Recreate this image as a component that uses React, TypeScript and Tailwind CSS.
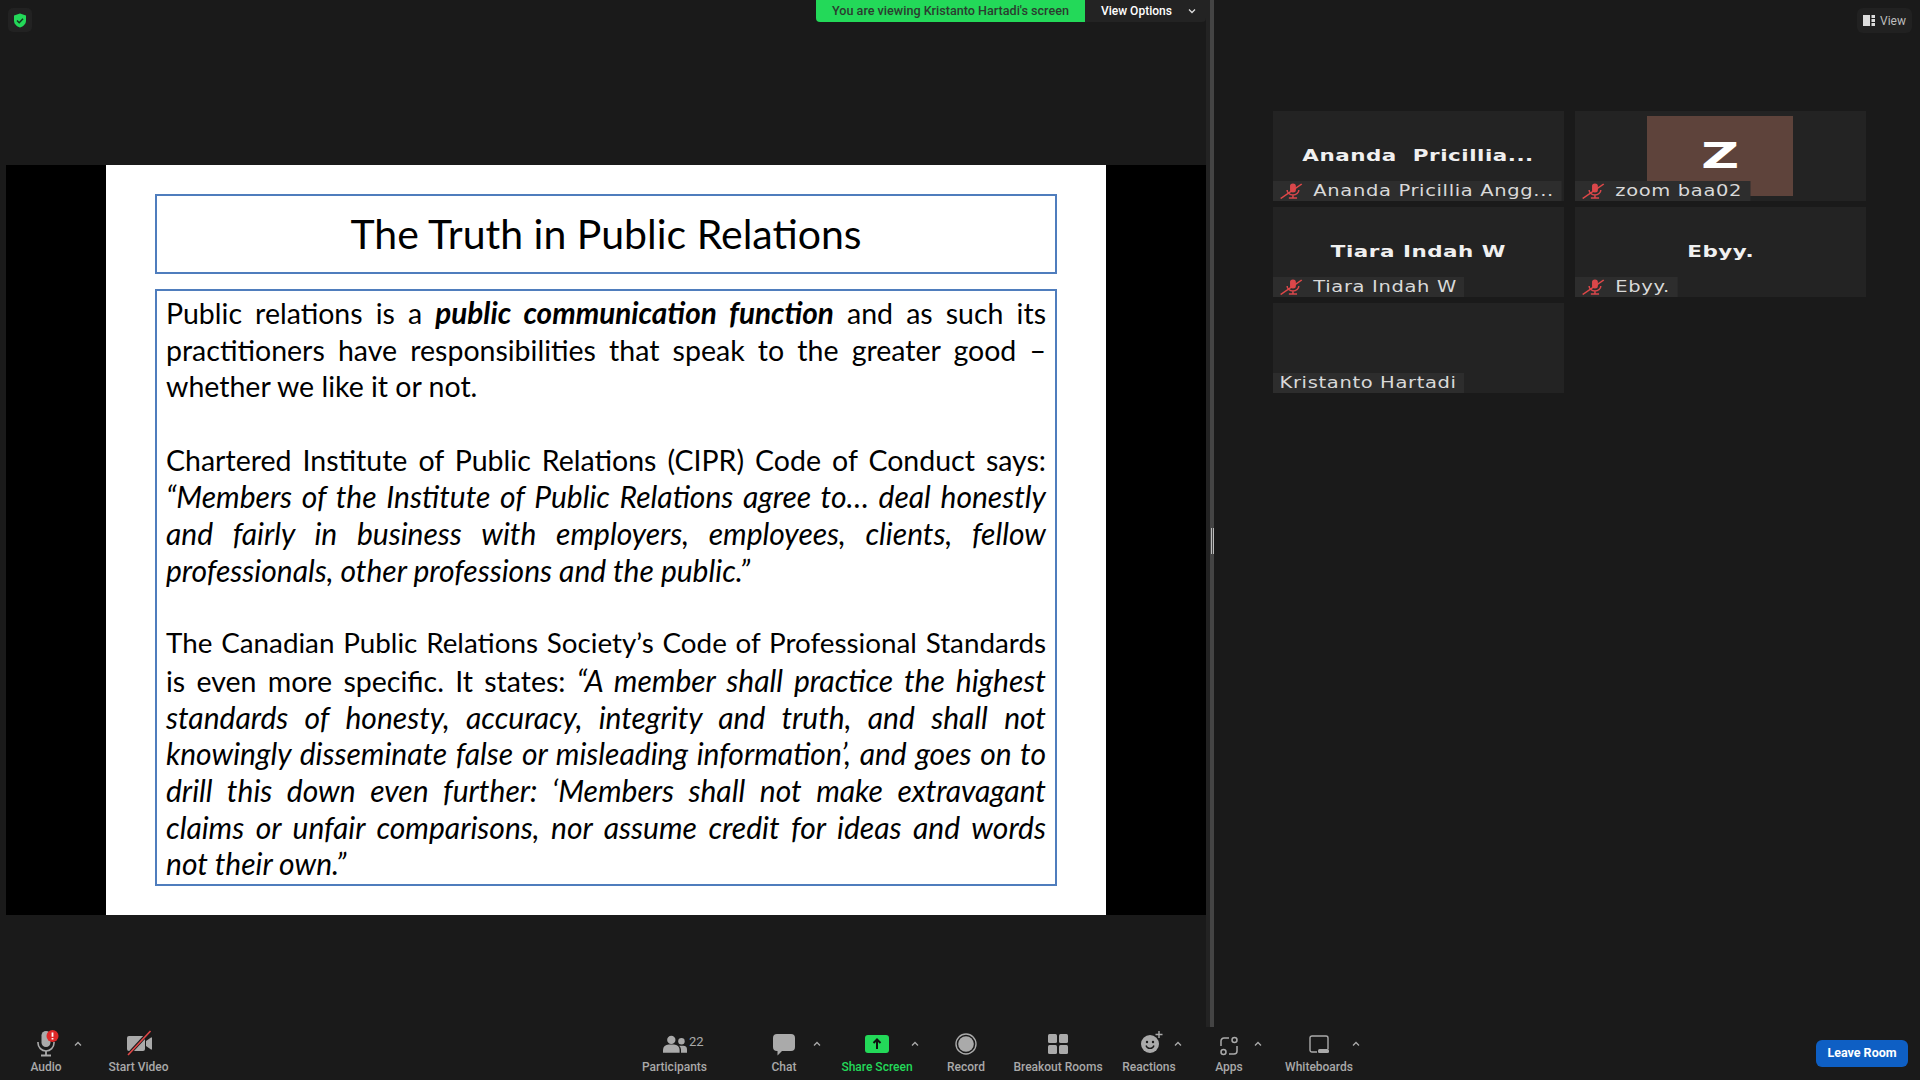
import React from 'react';

const uiFont = "font-['Roboto',sans-serif]";

function MicIcon() {
  return (
    <svg width="28" height="28" viewBox="0 0 28 28" className="mb-[-1px]">
      <rect x="9.500" y="1" width="9" height="16" rx="4.500" fill="#aaa" />
      <path d="M6 12v1a8 8 0 0 0 16 0v-1" fill="none" stroke="#aaa" strokeWidth="1.600" />
      <path d="M14 21v4M9 25.500h10" stroke="#aaa" strokeWidth="1.800" />
      <circle cx="20.500" cy="6" r="6" fill="#e02828" />
      <path d="M20.500 2.400v4.400M20.500 8v1.400" stroke="#fff" strokeWidth="1.800" />
    </svg>
  );
}

function VideoOffIcon() {
  return (
    <svg width="28" height="26" viewBox="0 0 28 26" className="mb-[1px]">
      <path d="M4 6h14a2 2 0 0 1 2 2v11a2 2 0 0 1-2 2H4a2 2 0 0 1-2-2V8a2 2 0 0 1 2-2z" fill="#aaa" />
      <path d="M21 11l5-3.500a.6.6 0 0 1 1 .5v11a.6.6 0 0 1-1 .5L21 16z" fill="#aaa" />
      <path d="M25 1L3 25" stroke="#1a1a1a" strokeWidth="3.400" />
      <path d="M25.500 1L3 25" stroke="#e04848" strokeWidth="1.600" />
    </svg>
  );
}

function PeopleIcon() {
  return (
    <svg width="24" height="19" viewBox="0 0 26 20" className="mb-[3px]">
      <circle cx="9" cy="5" r="4.500" fill="#aaa" />
      <path d="M0 19v-3a6 6 0 0 1 6-6h6a6 6 0 0 1 6 6v3z" fill="#aaa" />
      <circle cx="20" cy="6.500" r="3.500" fill="#aaa" />
      <path d="M19.500 19v-3.500a6 6 0 0 0-2-4.200h4.500a4 4 0 0 1 4 4V19z" fill="#aaa" />
    </svg>
  );
}

function ChatIcon() {
  return (
    <svg width="22" height="24" viewBox="0 0 22 24">
      <path d="M4 1h14a4 4 0 0 1 4 4v9a4 4 0 0 1-4 4H9l-4.500 4.500V18H4a4 4 0 0 1-4-4V5a4 4 0 0 1 4-4z" fill="#aaa" />
    </svg>
  );
}

function ShareIcon() {
  return (
    <div className="w-[24px] h-[18px] mb-[4px] rounded-[3px] bg-[#23d959] flex items-center justify-center">
      <svg width="10" height="12" viewBox="0 0 10 12">
        <path d="M5 11V2M1.500 5L5 1.500 8.500 5" fill="none" stroke="#0f0f0f" strokeWidth="2" />
      </svg>
    </div>
  );
}

function RecordIcon() {
  return (
    <svg width="22" height="22" viewBox="0 0 22 22" className="mb-[2px]">
      <circle cx="11" cy="11" r="10" fill="none" stroke="#aaa" strokeWidth="1.400" />
      <circle cx="11" cy="11" r="7.800" fill="#aaa" />
    </svg>
  );
}

function BreakoutIcon() {
  return (
    <svg width="20" height="20" viewBox="0 0 20 20" fill="#aaa" className="mb-[3px]">
      <rect x="0" y="0" width="9" height="9" rx="1.500" />
      <rect x="11" y="0" width="9" height="9" rx="1.500" />
      <rect x="0" y="11" width="9" height="9" rx="1.500" />
      <rect x="11" y="11" width="9" height="9" rx="1.500" />
    </svg>
  );
}

function ReactionIcon() {
  return (
    <svg width="24" height="24" viewBox="0 0 24 24" className="mb-[2px] ml-[5px]">
      <circle cx="10" cy="13" r="9" fill="#aaa" />
      <circle cx="7" cy="11" r="1.200" fill="#1a1a1a" />
      <circle cx="13" cy="11" r="1.200" fill="#1a1a1a" />
      <path d="M6 14.500a4.200 4.200 0 0 0 8 0" fill="none" stroke="#1a1a1a" strokeWidth="1.300" />
      <path d="M19 0v7M15.500 3.500h7" stroke="#aaa" strokeWidth="1.400" />
    </svg>
  );
}

function AppsIcon() {
  return (
    <svg width="18" height="20" viewBox="0 0 18 20" fill="none" stroke="#aaa" strokeWidth="1.500" className="mb-[1px]">
      <path d="M9 2H4a3 3 0 0 0-3 3v5" />
      <circle cx="14.500" cy="4" r="2.500" />
      <circle cx="3.500" cy="16" r="2.500" />
      <path d="M9 18h5a3 3 0 0 0 3-3v-5" />
    </svg>
  );
}

function WhiteboardIcon() {
  return (
    <svg width="20" height="20" viewBox="0 0 20 20" className="mb-[2px]">
      <path d="M8 17H3a2 2 0 0 1-2-2V3a2 2 0 0 1 2-2h14a2 2 0 0 1 2 2v11" fill="none" stroke="#aaa" strokeWidth="1.400" />
      <rect x="9" y="14" width="11" height="4" rx="1.500" fill="#aaa" />
    </svg>
  );
}

function Caret({ className }: { className: string }) {
  return (
    <svg className={`absolute ${className}`} width="8" height="6" viewBox="0 0 8 6">
      <path d="M1 4.500L4 1.500 7 4.500" fill="none" stroke="#aaa" strokeWidth="1.300" />
    </svg>
  );
}

function ToolButton({ label, width, icon, green, children }: { label: string; width: string; icon: React.ReactNode; green?: boolean; children?: React.ReactNode }) {
  return (
    <div className={`relative flex flex-col items-center shrink-0 ${width}`}>
      <div className="h-[33px] flex items-end pb-[3px]">{icon}</div>
      <span className={`text-[12px] leading-[14px] font-medium whitespace-nowrap ${green ? 'text-[#23d959]' : 'text-[#a9a9a9]'}`}>{label}</span>
      {children}
    </div>
  );
}

function MutedIcon() {
  return (
    <svg width="18" height="16" viewBox="0 0 20 16" preserveAspectRatio="none" className="shrink-0">
      <rect x="9" y="0.500" width="5" height="9" rx="2.500" fill="#d9474b" />
      <path d="M6.500 7a5 5 0 0 0 10 0M11.500 12v3M8 15h7" fill="none" stroke="#d9474b" strokeWidth="1.300" />
      <path d="M1 15.500L19 1" stroke="#e04848" strokeWidth="1.400" />
    </svg>
  );
}

// the gallery is a stretched capture: names come out about 1.3x wider than tall
function Tile({ big, label, muted = true, avatar }: { big?: string; label: string; muted?: boolean; avatar?: boolean }) {
  return (
    <div className="relative h-[90px] bg-[#232323] flex items-center justify-center overflow-hidden">
      {avatar && (
        <div className="absolute left-[72px] top-[5px] w-[146px] h-[80px] bg-[#5e433b] flex items-center justify-center">
          <span className="text-white font-bold text-[36px] scale-x-[1.45] font-['DejaVu_Sans',sans-serif]">Z</span>
        </div>
      )}
      {big && (
        <span className="text-[#f0f0f0] font-bold text-[16.500px] tracking-[0.4px] scale-x-[1.3] whitespace-pre font-['DejaVu_Sans',sans-serif]">{big}</span>
      )}
      <div className="absolute left-0 bottom-0 h-[20px] origin-bottom-left scale-x-[1.3] bg-[#2d2d2d] flex items-center pl-[5px] pr-[6px] gap-[8px]">
        {muted && <MutedIcon />}
        <span className="text-[#d9d9d9] text-[15px] tracking-[0.5px] whitespace-pre font-['DejaVu_Sans',sans-serif]">{label}</span>
      </div>
    </div>
  );
}

const jl = "block h-[36.700px] text-justify [text-align-last:justify]";
const it = "italic text-[30px]";

function Slide() {
  return (
    <div className="w-[1000px] h-[750px] bg-white flex flex-col pl-[49px] pr-[49px] pt-[29px] text-black font-['Lato',sans-serif]">
      <div className="h-[80px] shrink-0 border-2 border-[#4f7dbd] flex items-center justify-center text-[41px]">
        The Truth in Public Relations
      </div>
      <div className="mt-[15px] h-[597px] shrink-0 border-2 border-[#4f7dbd] px-[9px] pt-[4px] text-[28.500px] leading-[36.700px]">
        <span className={jl}>Public relations is a <b><i className="text-[29.700px]">public communication function</i></b> and as such its</span>
        <span className={jl}>practitioners have responsibilities that speak to the greater good –</span>
        <span className="block">whether we like it or not.</span>
        <span className="block h-[36.700px]" />
        <span className={jl}>Chartered Institute of Public Relations (CIPR) Code of Conduct says:</span>
        <span className={`${jl} ${it}`}>“Members of the Institute of Public Relations agree to… deal honestly</span>
        <span className={`${jl} ${it}`}>and fairly in business with employers, employees, clients, fellow</span>
        <span className={`block h-[36.700px] ${it}`}>professionals, other professions and the public.”</span>
        <span className="block h-[36.700px]" />
        <span className={`${jl} text-[27.800px]`}>The Canadian Public Relations Society’s Code of Professional Standards</span>
        <span className={jl}>is even more specific. It states: <i className="text-[30px]">“A member shall practice the highest</i></span>
        <span className={`${jl} ${it}`}>standards of honesty, accuracy, integrity and truth, and shall not</span>
        <span className={`${jl} ${it}`}>knowingly disseminate false or misleading information’, and goes on to</span>
        <span className={`${jl} ${it}`}>drill this down even further: ‘Members shall not make extravagant</span>
        <span className={`${jl} ${it}`}>claims or unfair comparisons, nor assume credit for ideas and words</span>
        <span className={`block h-[36.700px] ${it}`}>not their own.”</span>
      </div>
    </div>
  );
}

export default function App() {
  return (
    <div className={`w-[1920px] h-[1080px] bg-[#1a1a1a] flex flex-col overflow-hidden ${uiFont}`}>
      <div className="flex-1 flex min-h-0">
        {/* shared screen */}
        <div className="relative w-[1206px] shrink-0 pl-[6px] pt-[165px]">
          <div className="w-[1200px] h-[750px] bg-black flex justify-center">
            <Slide />
          </div>

          <div className="absolute left-[8px] top-[8px] w-[24px] h-[24px] rounded-[5px] bg-[#222] flex items-center justify-center">
            <svg width="14" height="15" viewBox="0 0 14 15">
              <path d="M7 0.500L13 2.500v5c0 3.500-2.500 5.800-6 7-3.500-1.200-6-3.500-6-7v-5z" fill="#23d959" />
              <path d="M4 7.500l2.200 2.200L10 5.800" fill="none" stroke="#14351f" strokeWidth="1.500" />
            </svg>
          </div>

          <div className="absolute left-[816px] top-0 h-[22px] w-[390px] flex rounded-b-[4px] overflow-hidden text-[12px] font-medium">
            <div className="w-[269px] bg-[#23d959] text-[#2b3d30] text-[12.600px] flex items-center justify-center">You are viewing Kristanto Hartadi's screen</div>
            <div className="flex-1 bg-[#232323] text-white flex items-center pl-[16px]">
              View Options
              <svg className="ml-[16px]" width="8" height="6" viewBox="0 0 8 6">
                <path d="M1 1.500L4 4.500 7 1.500" fill="none" stroke="#ddd" strokeWidth="1.300" />
              </svg>
            </div>
          </div>
        </div>

        {/* divider */}
        <div className="w-[8px] shrink-0 flex">
          <div className="w-[4px] bg-[#232323]" />
          <div className="w-[4px] pt-[54px] bg-[#444] flex items-center justify-center">
            <div className="w-[3px] h-[26px] border-x border-[#bbb]" />
          </div>
        </div>

        {/* gallery */}
        <div className="relative flex-1 pl-[59px] pt-[111px]">
          <div className="grid grid-cols-[291px_291px] gap-x-[11px] gap-y-[6px]">
            <Tile big="Ananda  Pricillia..." label="Ananda Pricillia Angg..." />
            <Tile avatar label="zoom baa02" />
            <Tile big="Tiara Indah W" label="Tiara Indah W" />
            <Tile big="Ebyy." label="Ebyy." />
            <Tile label="Kristanto Hartadi" muted={false} />
          </div>
          <div className="absolute right-[8px] top-[8px] w-[55px] h-[25px] rounded-[6px] bg-[#212121] flex items-center justify-center gap-[5px] text-[12px] text-[#bdbdbd]">
            <svg width="12" height="11" viewBox="0 0 12 11">
              <rect x="0" y="0" width="7" height="11" fill="#ddd" />
              <rect x="8.500" y="0" width="3.500" height="3" fill="#ddd" />
              <rect x="8.500" y="4" width="3.500" height="3" fill="#ddd" />
              <rect x="8.500" y="8" width="3.500" height="3" fill="#ddd" />
            </svg>
            View
          </div>
        </div>
      </div>

      {/* toolbar */}
      <div className="h-[53px] shrink-0 flex items-start pr-[12px]">
        <div className="flex pl-[21px]">
          <ToolButton label="Audio" width="w-[50px]" icon={<MicIcon />}>
            <Caret className="left-[53px] top-[14px]" />
          </ToolButton>
          <ToolButton label="Start Video" width="w-[135px]" icon={<VideoOffIcon />} />
        </div>

        <div className="flex ml-[414px]">
          <ToolButton label="Participants" width="w-[109px]" icon={<PeopleIcon />}>
            <span className="absolute left-[69px] top-[5px] text-[13px] text-[#aaa]">22</span>
          </ToolButton>
          <ToolButton label="Chat" width="w-[110px]" icon={<ChatIcon />}>
            <Caret className="left-[84px] top-[14px]" />
          </ToolButton>
          <ToolButton label="Share Screen" width="w-[76px]" green icon={<ShareIcon />}>
            <Caret className="left-[72px] top-[14px]" />
          </ToolButton>
          <ToolButton label="Record" width="w-[102px]" icon={<RecordIcon />} />
          <ToolButton label="Breakout Rooms" width="w-[82px]" icon={<BreakoutIcon />} />
          <ToolButton label="Reactions" width="w-[100px]" icon={<ReactionIcon />}>
            <Caret className="left-[75px] top-[14px]" />
          </ToolButton>
          <ToolButton label="Apps" width="w-[60px]" icon={<AppsIcon />}>
            <Caret className="left-[55px] top-[14px]" />
          </ToolButton>
          <ToolButton label="Whiteboards" width="w-[120px]" icon={<WhiteboardIcon />}>
            <Caret className="left-[93px] top-[14px]" />
          </ToolButton>
        </div>

        <div className="ml-auto mt-[13px] w-[92px] h-[27px] rounded-[6px] bg-[#0e5fc4] text-white text-[12.500px] font-bold flex items-center justify-center">
          Leave Room
        </div>
      </div>
    </div>
  );
}
